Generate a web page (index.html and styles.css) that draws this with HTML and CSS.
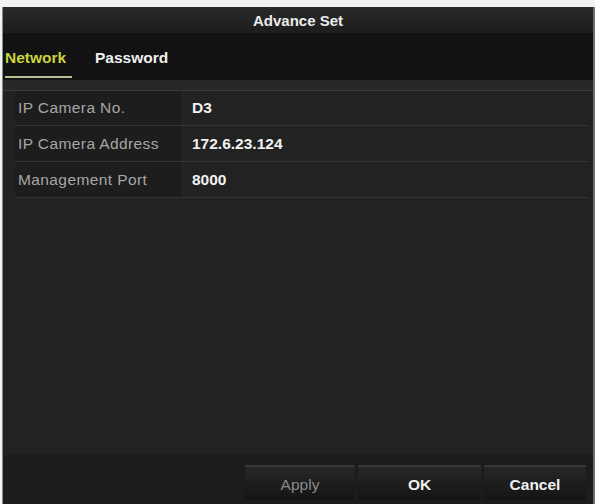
FILE: index.html
```html
<!DOCTYPE html>
<html>
<head>
<meta charset="utf-8">
<link rel="stylesheet" href="styles.css">
</head>
<body>
<div class="window">
  <div class="title">Advance Set</div>
  <div class="tabs">
    <div class="tab active">Network</div>
    <div class="tab">Password</div>
  </div>
  <div class="strip"></div>
  <div class="content">
    <div class="row">
      <div class="label">IP Camera No.</div>
      <div class="value">D3</div>
    </div>
    <div class="row">
      <div class="label">IP Camera Address</div>
      <div class="value">172.6.23.124</div>
    </div>
    <div class="row">
      <div class="label">Management Port</div>
      <div class="value">8000</div>
    </div>
  </div>
  <div class="footer">
    <div class="btn btn-apply">Apply</div>
    <div class="btn btn-ok">OK</div>
    <div class="btn btn-cancel">Cancel</div>
  </div>
</div>
</body>
</html>
```
FILE: styles.css
```css
html, body {
  margin: 0;
  padding: 0;
  background: #f2f2f2;
  font-family: "Liberation Sans", Arial, sans-serif;
}
.window {
  margin: 7px 0 0 2px;
  width: 593px;
  height: 497px;
  background: #1b1b1b;
  border-left: 1px solid #8a8a8a;
  border-right: 2px solid #6e6e6e;
  display: flex;
  flex-direction: column;
  box-sizing: border-box;
}
.title {
  height: 26px;
  line-height: 28px;
  text-align: center;
  color: #ececec;
  font-weight: bold;
  font-size: 15px;
  background: linear-gradient(#2a2a2a, #1c1c1c);
}
.tabs {
  height: 47px;
  background: #121212;
  display: flex;
  gap: 23px;
  padding-left: 2px;
}
.tab {
  height: 45px;
  box-sizing: border-box;
  padding-top: 16px;
  line-height: 18px;
  font-size: 15.5px;
  font-weight: bold;
  color: #f0f0f0;
}
.tab.active {
  color: #c9d23e;
  width: 67px;
  border-bottom: 2px solid #bdbd95;
}
.strip {
  height: 10px;
  background: #272727;
  border-bottom: 1px solid #3b3b3b;
}
.content {
  flex: 1;
  background: #222222;
  padding: 0 4px 0 12px;
}
.row {
  height: 36px;
  display: flex;
  border-bottom: 1px solid #333333;
  box-sizing: border-box;
  align-items: stretch;
}
.row:first-child {
  height: 35px;
}
.label {
  width: 168px;
  background: #1d1d1d;
  border-right: 1px solid #2a2a2a;
  color: #a6a6a6;
  font-size: 15.5px;
  display: flex;
  align-items: center;
  padding-left: 3px;
  box-sizing: border-box;
  letter-spacing: 0.4px;
}
.value {
  padding-left: 9px;
  color: #f2f2f2;
  font-weight: bold;
  font-size: 15.5px;
  display: flex;
  align-items: center;
}
.footer {
  height: 49px;
  background: #1c1c1c;
  display: flex;
  padding: 10px 7px 4px 0;
  box-sizing: border-box;
  justify-content: flex-end;
  gap: 3px;
}
.btn {
  height: 35px;
  line-height: 36px;
  text-align: center;
  font-size: 15.5px;
  color: #f0f0f0;
  font-weight: bold;
  background: linear-gradient(#262626, #151515);
  border-top: 2px solid #363636;
  box-sizing: border-box;
}
.btn-apply {
  width: 110px;
  color: #8a8a8a;
  font-weight: normal;
}
.btn-ok {
  width: 123px;
}
.btn-cancel {
  width: 102px;
}
```
